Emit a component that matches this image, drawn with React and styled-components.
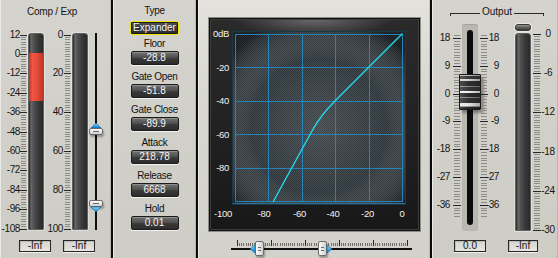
import React from 'react';
import styled, { createGlobalStyle } from 'styled-components';

const GlobalStyle = createGlobalStyle`
  html, body { margin: 0; padding: 0; background: #0b0b0b; }
  body { font-family: "Liberation Sans", Arial, sans-serif; }
  #root { width: 558px; height: 258px; overflow: hidden; }
`;

const Rack = styled.div`
  display: flex;
  gap: 2px;
  width: 558px;
  height: 258px;
  background: #0b0b0b;
`;

const Panel = styled.div`
  flex: none;
  width: ${p => p.$w}px;
  height: 258px;
  box-sizing: border-box;
  display: flex;
  flex-direction: column;
  align-items: ${p => p.$align || 'stretch'};
  padding-left: ${p => p.$pl || 0}px;
  background: ${p => p.$light
    ? 'linear-gradient(180deg, #e3e2dd 0%, #d7d6d0 40%, #d2d1cb 100%)'
    : 'linear-gradient(180deg, #d4d3cd 0%, #cdccc5 100%)'};
  box-shadow: inset 1px 0 0 rgba(255,255,255,.55), inset -1px 0 0 rgba(0,0,0,.12);
  color: #141414;
`;

const PanelTitle = styled.div`
  margin-top: 5px;
  height: 14px;
  line-height: 14px;
  font-size: 10px;
  letter-spacing: -0.2px;
  text-align: center;
  padding-right: ${p => p.$shift || 0}px;
`;

/* ---------- rulers ---------- */
const RulerBox = styled.div`
  position: relative;
  flex: none;
  width: ${p => p.$w}px;
  height: ${p => p.$h}px;
`;

const TickSvg = styled.svg`
  position: absolute;
  left: 0;
  top: 0;
  overflow: visible;
`;

const ScaleNum = styled.span`
  position: absolute;
  font-size: 10px;
  line-height: 12px;
  letter-spacing: -0.4px;
  color: #161616;
  white-space: nowrap;
  transform: translateX(${p => (p.$anchor === 'middle' ? '-50%' : p.$anchor === 'end' ? '-100%' : '0')});
`;

function Ruler({ w, h, marks, first, step, minor, pre = 0, post = 0, majorX, minorX, labelX, anchor = 'end' }) {
  const sub = step / minor;
  const total = (marks.length - 1) * minor;
  const ticks = [];
  for (let k = -pre; k <= total + post; k++) {
    const y = Math.round(first + k * sub) + 0.5;
    const major = k >= 0 && k <= total && k % minor === 0;
    const [x0, x1] = major ? majorX : minorX;
    ticks.push(
      <line key={k} x1={x0} x2={x1} y1={y} y2={y} stroke={major ? '#262626' : '#8d8c86'} shapeRendering="crispEdges" />
    );
  }
  return (
    <RulerBox $w={w} $h={h}>
      <TickSvg width={w} height={h}>{ticks}</TickSvg>
      {marks.map((m, i) => (
        <ScaleNum key={m} $anchor={anchor} style={{ top: first + i * step - 6, left: labelX }}>
          {m}
        </ScaleNum>
      ))}
    </RulerBox>
  );
}

/* ---------- meters ---------- */
const MeterBody = styled.div`
  position: relative;
  flex: none;
  width: 16px;
  height: ${p => p.$h}px;
  box-sizing: border-box;
  border: 1px solid #606060;
  border-radius: 3px 3px 1px 1px;
  overflow: hidden;
  background:
    radial-gradient(circle at 1px 1px, rgba(255,255,255,0.10) 0.6px, transparent 0.9px) 0 0 / 2px 2px,
    linear-gradient(90deg, #191919 0%, #5e5e5e 16%, #474747 30%, #2d2d2d 62%, #1b1b1b 100%);
  box-shadow: 0 0 0 1px rgba(255,255,255,.35);
`;

const MeterFill = styled.div`
  position: absolute;
  left: 0;
  right: 0;
  background:
    radial-gradient(circle at 1px 1px, rgba(255,255,255,0.18) 0.6px, transparent 0.9px) 0 0 / 2px 2px,
    linear-gradient(90deg, #b81a0c 0%, #f0402a 25%, #e3321e 60%, #b61c0e 100%);
`;

const PeakCap = styled.div`
  flex: none;
  width: 16px;
  height: 7px;
  box-sizing: border-box;
  border: 1px solid #3a3a3a;
  border-radius: 3px;
  background: linear-gradient(#959595, #555 60%, #3c3c3c);
  box-shadow: 0 0 0 1px rgba(255,255,255,.5);
`;

const MeterColumn = styled.div`
  flex: none;
  display: flex;
  flex-direction: column;
  gap: 2px;
`;

/* ---------- readouts ---------- */
const ReadoutRow = styled.div`
  display: flex;
  gap: ${p => p.$gap}px;
  margin-top: ${p => p.$mt}px;
  padding-left: ${p => p.$pl}px;
`;

const Readout = styled.div`
  flex: none;
  width: ${p => p.$w}px;
  height: 12px;
  box-sizing: border-box;
  border: 1px solid #262626;
  background: linear-gradient(#d6d5cf, #e6e5e0);
  box-shadow: 0 1px 0 rgba(255,255,255,.7), inset 1px 1px 0 rgba(0,0,0,.12);
  font-size: 10px;
  line-height: 10px;
  text-align: center;
  color: #141414;
`;

/* ---------- left panel ---------- */
const MeterArea = styled.div`
  display: flex;
  margin-top: ${p => p.$mt}px;
  height: ${p => p.$h}px;
`;

const VSliderCol = styled.div`
  position: relative;
  flex: none;
  width: 16px;
  height: 197px;
  display: flex;
  justify-content: center;
`;

const VLine = styled.div`
  width: 2px;
  height: 100%;
  background: #0e0e0e;
`;

const ThumbBody = styled.div`
  position: absolute;
  box-sizing: border-box;
  border: 1px solid #6d6d6d;
  border-radius: 2px;
  background: linear-gradient(${p => (p.$vertical ? '180deg' : '90deg')}, #fdfdfd, #cfcfcf);
  box-shadow: 1px 2px 2px rgba(0,0,0,.3);
  &::before {
    content: '';
    position: absolute;
    background: #6a6a6a;
    ${p => p.$vertical
      ? 'left: 3px; right: 3px; top: 2px; height: 1px;'
      : 'left: 2px; width: 3px; top: 5px; height: 1px; box-shadow: 0 3px 0 #6a6a6a;'}
  }
`;

const Arrow = styled.svg`
  position: absolute;
  overflow: visible;
`;

function BlueArrow({ dir, style }) {
  const pts = {
    up: '0,5 5,0 10,5',
    down: '0,0 10,0 5,5',
    left: '5,0 0,4 5,8',
    right: '0,0 5,4 0,8',
  }[dir];
  const size = dir === 'up' || dir === 'down' ? { w: 10, h: 5 } : { w: 5, h: 8 };
  return (
    <Arrow width={size.w} height={size.h} style={style}>
      <defs>
        <linearGradient id={'ag' + dir} x1="0" y1="0" x2="0" y2="1">
          <stop offset="0" stopColor="#7fdcff" />
          <stop offset="1" stopColor="#0a7fd0" />
        </linearGradient>
      </defs>
      <polygon points={pts} fill={`url(#ag${dir})`} stroke="#0a5f9a" strokeWidth="0.6" />
    </Arrow>
  );
}

/* ---------- middle panel ---------- */
const ParamStack = styled.div`
  display: flex;
  flex-direction: column;
  align-items: center;
  padding-top: 5px;
`;

const ParamGroup = styled.div`
  height: 33px;
  display: flex;
  flex-direction: column;
  align-items: center;
`;

const ParamLabel = styled.div`
  font-size: 10px;
  line-height: 12px;
  letter-spacing: -0.3px;
  color: #111;
  white-space: nowrap;
`;

const ValueBtn = styled.div`
  width: ${p => (p.$active ? 49 : 48)}px;
  height: ${p => (p.$active ? 14 : 14)}px;
  margin-top: ${p => (p.$active ? 4 : 1)}px;
  box-sizing: border-box;
  border: 1px solid ${p => (p.$active ? '#f2e600' : '#1c1c1c')};
  border-radius: 2px;
  background: ${p => p.$active
    ? 'linear-gradient(#555, #3a3a3a 50%, #2b2b2b)'
    : 'linear-gradient(#727272 0%, #505050 45%, #3a3a3a 55%, #2c2c2c 100%)'};
  box-shadow: ${p => p.$active
    ? 'inset 0 0 0 1px #1a1a1a'
    : '0 1px 0 rgba(255,255,255,.75), inset 0 1px 0 rgba(255,255,255,.22)'};
  color: #f4f4f4;
  font-size: 10px;
  line-height: 12px;
  text-align: center;
  white-space: nowrap;
`;

/* ---------- graph panel ---------- */
const Frame = styled.div`
  margin-top: 18px;
  width: 211px;
  height: 213px;
  box-sizing: border-box;
  border: 1px solid #111;
  padding-top: 12px;
  display: grid;
  grid-template-columns: 22px 174px;
  grid-template-rows: 174px auto;
  background:
    radial-gradient(ellipse 80px 18px at 50% 0%, rgba(255,255,255,.30), rgba(255,255,255,0)),
    linear-gradient(180deg, #2a2a2a 0%, #222 50%, #181818 100%);
  box-shadow: 0 0 0 1px #8e8d88, inset 0 0 0 1px #3c3c3c;
`;

const YAxis = styled.div`
  position: relative;
`;

const XAxis = styled.div`
  position: relative;
  grid-column: 1 / span 2;
`;

const AxisNum = styled.span`
  position: absolute;
  font-size: 9.5px;
  line-height: 12px;
  letter-spacing: -0.3px;
  color: #f2f2f2;
  white-space: nowrap;
  transform: translateX(${p => (p.$anchor === 'end' ? '-100%' : '-50%')});
`;

const PlotSvg = styled.svg`
  display: block;
`;

function TransferPlot() {
  const g = [0, 1, 2, 3, 4, 5].map(i => 3 + i * 33.4);
  return (
    <PlotSvg width="174" height="174">
      <defs>
        <pattern id="chk" width="2" height="2" patternUnits="userSpaceOnUse">
          <rect width="2" height="2" fill="#262d32" />
          <rect width="1" height="1" fill="#3b444a" />
          <rect x="1" y="1" width="1" height="1" fill="#3b444a" />
        </pattern>
        <radialGradient id="glow" cx="50%" cy="55%" r="65%">
          <stop offset="0" stopColor="#ffffff" stopOpacity="0.13" />
          <stop offset="0.6" stopColor="#ffffff" stopOpacity="0.03" />
          <stop offset="1" stopColor="#000000" stopOpacity="0.35" />
        </radialGradient>
      </defs>
      <rect width="174" height="174" fill="url(#chk)" />
      <rect width="174" height="174" fill="url(#glow)" />
      {g.map(v => (
        <line key={'v' + v} x1={Math.round(v) + 0.5} x2={Math.round(v) + 0.5} y1="3" y2="171" stroke="#2783b6" shapeRendering="crispEdges" />
      ))}
      {g.map(v => (
        <line key={'h' + v} y1={Math.round(v) + 0.5} y2={Math.round(v) + 0.5} x1="3" x2="171" stroke="#2783b6" shapeRendering="crispEdges" />
      ))}
      <rect x="0.5" y="0.5" width="173" height="173" fill="none" stroke="#16394b" />
      <line x1="1" x2="173" y1="172.5" y2="172.5" stroke="#2f6f8f" />
      <path d="M 41 171 L 80 100 Q 88.5 84.5 103.2 69.8 L 170.5 2.5" fill="none" stroke="#21dbe9" strokeWidth="1.4" />
    </PlotSvg>
  );
}

const HSliderBox = styled.div`
  position: relative;
  flex: none;
  margin: 9px 0 0 22px;
  width: 181px;
  height: 18px;
  display: flex;
  flex-direction: column;
`;

const HLine = styled.div`
  height: 2px;
  background: #0e0e0e;
`;

function HScaleTicks() {
  const lines = [];
  const sub = 34 / 16;
  for (let k = 0; k <= 80; k++) {
    const x = Math.round(6 + k * sub) + 0.5;
    const major = k % 16 === 0;
    lines.push(
      <line key={k} x1={x} x2={x} y1={major ? 0 : 3} y2="6" stroke={major ? '#2a2a2a' : '#6f6e69'} shapeRendering="crispEdges" />
    );
  }
  return <svg width="181" height="8" style={{ display: 'block' }}>{lines}</svg>;
}

/* ---------- output panel ---------- */
const OutTitleRow = styled.div`
  display: flex;
  align-items: flex-start;
  gap: 2px;
  margin-top: 5px;
  height: 14px;
  padding-left: 18px;
`;

const Bracket = styled.div`
  width: 30px;
  height: 3px;
  margin-top: 8px;
  box-sizing: border-box;
  border-top: 1px solid #2a2a2a;
  ${p => (p.$side === 'left' ? 'border-left: 1px solid #2a2a2a;' : 'border-right: 1px solid #2a2a2a;')}
`;

const OutTitle = styled.div`
  font-size: 10px;
  line-height: 14px;
  color: #141414;
  width: 30px;
  text-align: center;
`;

const FaderTrack = styled.div`
  position: relative;
  flex: none;
  width: 16px;
  height: 207px;
  box-sizing: border-box;
  padding: 6px 0;
  display: flex;
  justify-content: center;
  background: #b8b7b0;
  border-radius: 3px;
  box-shadow: inset 0 1px 1px rgba(0,0,0,.12);
`;

const FaderSlot = styled.div`
  width: 6px;
  height: 100%;
  background: #0c0c0c;
  border-radius: 3px;
`;

const FaderCap = styled.div`
  position: absolute;
  left: -3px;
  top: 50px;
  width: 22px;
  height: 36px;
  box-sizing: border-box;
  border: 1px solid #1a1a1a;
  border-radius: 1px;
  background:
    linear-gradient(90deg, rgba(255,255,255,.14), rgba(255,255,255,0) 40%, rgba(0,0,0,.28)),
    linear-gradient(180deg, #bdbdbd 0 1px, #3c3c3c 1px 4px, #d4d4d4 4px 6px, #303030 6px 11px, #8c8c8c 11px 12px, #383838 12px 16px, #f4f4f4 16px 18px, #2e2e2e 18px 22px, #8a8a8a 22px 23px, #333 23px 28px, #e6e6e6 28px 31px, #9a9a9a 31px 32px, #262626 32px);
  box-shadow: 3px 3px 3px rgba(0,0,0,.35);
`;

const params = [
  { label: 'Type', value: 'Expander', active: true },
  { label: 'Floor', value: '-28.8' },
  { label: 'Gate Open', value: '-51.8' },
  { label: 'Gate Close', value: '-89.9' },
  { label: 'Attack', value: '218.78' },
  { label: 'Release', value: '6668' },
  { label: 'Hold', value: '0.01' },
];

const xLabels = [
  { t: '-100', x: 13 },
  { t: '-80', x: 54 },
  { t: '-60', x: 89.5 },
  { t: '-40', x: 123 },
  { t: '-20', x: 157.5 },
  { t: '0', x: 192 },
];

const yLabels = ['0dB', '-20', '-40', '-60', '-80'];

export default function App() {
  return (
    <>
      <GlobalStyle />
      <Rack>
        {/* Comp / Exp */}
        <Panel $w={111}>
          <PanelTitle $shift={7}>Comp / Exp</PanelTitle>
          <MeterArea $mt={14} $h={197}>
            <Ruler
              w={28} h={197}
              marks={['12', '0', '-12', '-24', '-36', '-48', '-60', '-72', '-84', '-96', '-108']}
              first={1.5} step={19.4} minor={8}
              majorX={[20, 27]} minorX={[21, 26]} labelX={20}
            />
            <MeterBody $h={197}>
              <MeterFill style={{ top: 19, height: 48 }} />
            </MeterBody>
            <Ruler
              w={28} h={197}
              marks={['0', '20', '40', '60', '80', '100']}
              first={1.5} step={38.8} minor={16}
              majorX={[20, 27]} minorX={[21, 26]} labelX={19}
            />
            <MeterBody $h={197} />
            <VSliderCol>
              <VLine />
              <BlueArrow dir="up" style={{ left: 3, top: 90 }} />
              <ThumbBody $vertical style={{ left: 1, top: 95, width: 14, height: 7 }} />
              <ThumbBody $vertical style={{ left: 1, top: 167, width: 14, height: 7 }} />
              <BlueArrow dir="down" style={{ left: 3, top: 174 }} />
            </VSliderCol>
          </MeterArea>
          <ReadoutRow $mt={10} $pl={19} $gap={12}>
            <Readout $w={32}>-Inf</Readout>
            <Readout $w={32}>-Inf</Readout>
          </ReadoutRow>
        </Panel>

        {/* Parameters */}
        <Panel $w={83}>
          <ParamStack>
            {params.map(p => (
              <ParamGroup key={p.label}>
                <ParamLabel>{p.label}</ParamLabel>
                <ValueBtn $active={p.active}>{p.value}</ValueBtn>
              </ParamGroup>
            ))}
          </ParamStack>
        </Panel>

        {/* Graph */}
        <Panel $w={232} $pl={11} $light $align="flex-start">
          <Frame>
            <YAxis>
              {yLabels.map((t, i) => (
                <AxisNum key={t} $anchor="end" style={{ left: 19, top: 3 + i * 33.6 - 6 }}>{t}</AxisNum>
              ))}
            </YAxis>
            <TransferPlot />
            <XAxis>
              {xLabels.map(l => (
                <AxisNum key={l.t} style={{ left: l.x, top: 3 }}>{l.t}</AxisNum>
              ))}
            </XAxis>
          </Frame>
          <HSliderBox>
            <HScaleTicks />
            <HLine />
            <BlueArrow dir="left" style={{ left: 19, top: 5 }} />
            <ThumbBody style={{ left: 24, top: 1, width: 9, height: 15 }} />
            <ThumbBody style={{ left: 87, top: 1, width: 9, height: 15 }} />
            <BlueArrow dir="right" style={{ left: 96, top: 5 }} />
          </HSliderBox>
        </Panel>

        {/* Output */}
        <Panel $w={126}>
          <OutTitleRow>
            <Bracket $side="left" />
            <OutTitle>Output</OutTitle>
            <Bracket $side="right" />
          </OutTitleRow>
          <MeterArea $mt={5} $h={207}>
            <Ruler
              w={30} h={207}
              marks={['18', '9', '0', '-9', '-18', '-27', '-36']}
              first={14} step={27.8} minor={10} pre={1} post={4}
              majorX={[21, 29]} minorX={[22, 28]} labelX={18}
            />
            <FaderTrack>
              <FaderSlot />
              <FaderCap />
            </FaderTrack>
            <Ruler
              w={37} h={207}
              marks={['18', '9', '0', '-9', '-18', '-27', '-36']}
              first={14} step={27.8} minor={10} pre={1} post={4}
              majorX={[2, 10]} minorX={[3, 9]} labelX={21}
            />
            <MeterColumn>
              <PeakCap />
              <MeterBody $h={198} />
            </MeterColumn>
            <Ruler
              w={27} h={207}
              marks={['0', '-6', '-12', '-18', '-24', '-30']}
              first={10} step={39.2} minor={16}
              majorX={[2, 10]} minorX={[3, 9]} labelX={17} anchor="middle"
            />
          </MeterArea>
          <ReadoutRow $mt={9} $pl={22} $gap={22}>
            <Readout $w={32}>0.0</Readout>
            <Readout $w={30}>-Inf</Readout>
          </ReadoutRow>
        </Panel>
      </Rack>
    </>
  );
}
